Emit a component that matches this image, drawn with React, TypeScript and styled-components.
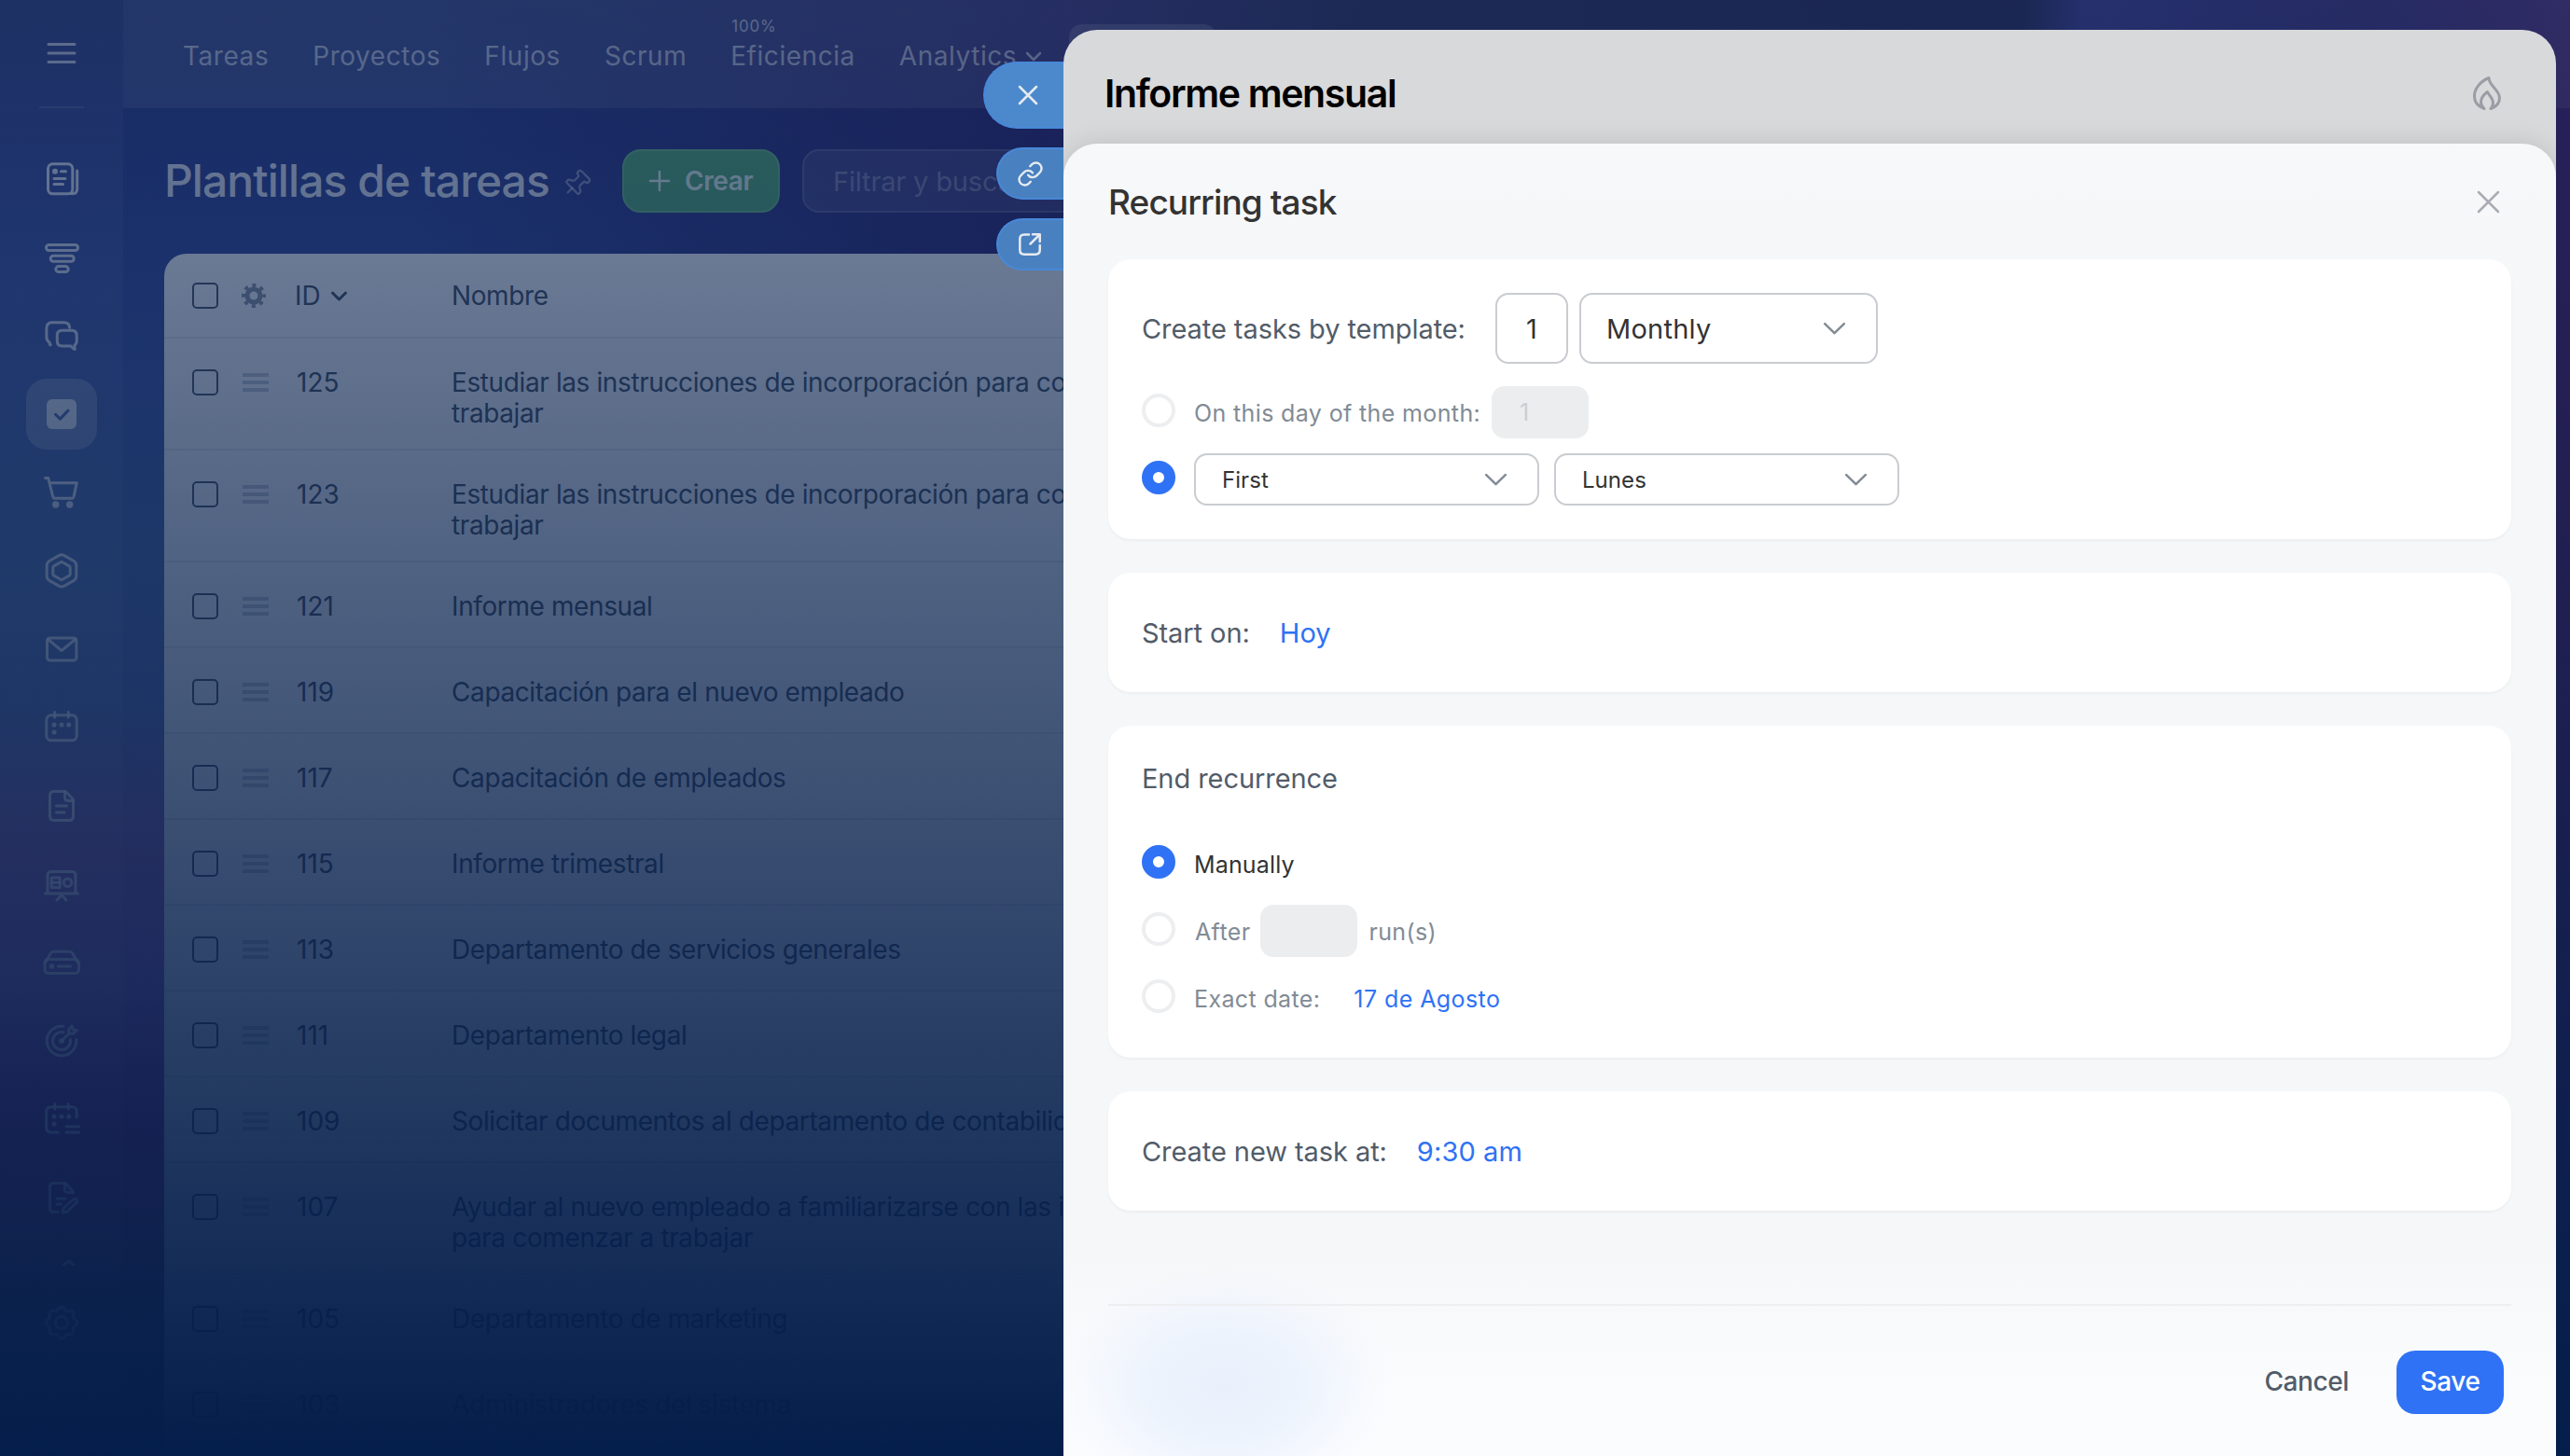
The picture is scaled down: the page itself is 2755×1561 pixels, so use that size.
import React, { ReactNode } from "react";
import styled, { createGlobalStyle } from "styled-components";
import { Link as LinkIcon, Pin } from "lucide-react";

const GlobalStyle = createGlobalStyle`
  *, *::before, *::after { box-sizing: border-box; }
  html, body { margin: 0; padding: 0; }
  body {
    width: 2755px;
    height: 1561px;
    overflow: hidden;
    font-family: Inter, "Liberation Sans", sans-serif;
    font-size: 28px;
  }
`;

/* ---------- shell ---------- */

const Screen = styled.div`
  position: relative;
  display: flex;
  width: 2755px;
  height: 1561px;
  overflow: hidden;
  background:
    linear-gradient(
      97deg,
      transparent 16%,
      rgba(52, 36, 104, 0.85) 39%,
      #1c1c4a 50%,
      #191745 73.6%,
      #302c82 75.8%,
      #32206d 86%,
      #48216f 93%,
      #63215e 95.5%,
      #642860 100%
    ),
    linear-gradient(
      180deg,
      #2c3a78 0,
      #33408a 150px,
      #3d4f9e 290px,
      #5471ac 600px,
      #6476af 760px,
      #9a68ab 918px,
      #9c67b8 1050px,
      #8f388b 1200px,
      #a03c70 1290px,
      #785a5a 1400px,
      #785a5a 1561px
    );
`;

const Scrim = styled.div`
  position: absolute;
  inset: 0;
  background: linear-gradient(180deg, rgba(4, 30, 75, 0.505) 0, rgba(4, 30, 75, 1) 100%);
`;

/* ---------- sidebar ---------- */

const Sidebar = styled.aside`
  display: flex;
  flex-direction: column;
  align-items: center;
  flex: none;
  width: 132px;
  background: rgba(255, 255, 255, 0.06);
  color: rgba(255, 255, 255, 0.82);
`;

const MenuToggle = styled.div`
  display: flex;
  align-items: center;
  justify-content: center;
  width: 48px;
  height: 116px;
  border-bottom: 2px solid rgba(255, 255, 255, 0.13);
  color: rgba(255, 255, 255, 0.66);
`;

const AppList = styled.nav`
  display: flex;
  flex-direction: column;
  align-items: center;
  height: 1207px;
  margin-top: 34px;
  overflow: hidden;
`;

const AppItem = styled.div<{ $active?: boolean }>`
  display: flex;
  align-items: center;
  justify-content: center;
  flex: none;
  width: 76px;
  height: 76px;
  margin: 4px 0;
  border-radius: 22px;
  background: ${(p) => (p.$active ? "rgba(255,255,255,0.25)" : "transparent")};
`;

const SettingsItem = styled(AppItem)`
  margin-top: 23px;
`;

const Glyph = styled.svg`
  display: block;
  flex: none;
  overflow: visible;
  fill: none;
  stroke: currentColor;
  stroke-width: 3;
  stroke-linecap: round;
  stroke-linejoin: round;
`;

const AppGlyph = ({ children }: { children: ReactNode }) => (
  <Glyph width="48" height="48" viewBox="0 0 48 48">
    {children}
  </Glyph>
);

const Dot = ({ x, y, r = 2.6 }: { x: number; y: number; r?: number }) => (
  <circle cx={x} cy={y} r={r} fill="currentColor" stroke="none" />
);

const flowerPath = () => {
  const steps = 96;
  const points: string[] = [];
  for (let i = 0; i < steps; i++) {
    const a = (i / steps) * Math.PI * 2;
    const r = 15.4 + 1.5 * Math.cos(8 * a);
    points.push(`${(24 + r * Math.sin(a)).toFixed(2)} ${(24 - r * Math.cos(a)).toFixed(2)}`);
  }
  return `M${points.join("L")}Z`;
};

const appIcons: { key: string; active?: boolean; icon: ReactNode }[] = [
  {
    key: "feed",
    icon: (
      <>
        <rect x="9.5" y="7.8" width="26.3" height="32" rx="5" />
        <Dot x={17} y={15.8} r={3} />
        <path d="M23.5 15.7h5M16 23.4h12M16 29.4h9.5M40.7 15v19.5q0 5.3-5.5 5.3" />
      </>
    ),
  },
  {
    key: "crm",
    icon: (
      <>
        <rect x="7.5" y="10.5" width="34" height="6" rx="3" />
        <rect x="12.2" y="22.3" width="25" height="6" rx="3" />
        <rect x="17.8" y="33.6" width="13.4" height="6" rx="3" />
      </>
    ),
  },
  {
    key: "chat",
    icon: (
      <>
        <path d="M12.3 33.6q-1.2 1.4-1-2.2-3.4-2.4-3.4-6V15.8q0-6 6-6h12.5q6 0 6.2 5.5" />
        <path d="M24.5 18.2h10.5q5.2 0 5.2 5.2v6q0 3.2-2.2 4.6l.2 4.6q-2.6-1.2-4.2-3.6h-9.5q-5.2 0-5.2-5.2v-6.4q0-5.2 5.2-5.2Z" />
      </>
    ),
  },
  {
    key: "tasks",
    active: true,
    icon: (
      <>
        <rect x="8" y="8" width="32" height="32" rx="6" fill="currentColor" stroke="none" />
        <path d="M17.5 24.3l5 4.8 8.5-9" stroke="#5c6fae" />
      </>
    ),
  },
  {
    key: "shop",
    icon: (
      <>
        <path d="M6.5 8.6h3.2l1.3 5.1M11 13.7h29.3l-3.2 14.6q-.5 2-2.6 2H17.3q-2.1 0-2.6-2L11 13.7" />
        <Dot x={17.7} y={37} r={3.7} />
        <Dot x={32.7} y={37} r={3.7} />
      </>
    ),
  },
  {
    key: "hex",
    icon: (
      <>
        <path d="M21.5 7.4q2.5-1.2 5 0l10.3 5.8q3 1.7 3 5.2v11q0 3.5-3 5.2l-10.3 5.8q-2.5 1.2-5 0l-10.3-5.8q-3-1.7-3-5.2v-11q0-3.5 3-5.2Z" />
        <path d="M24 14.2l8.2 4.7q1 .6 1 1.700v6.800q0 1.100-1 1.700L24 33.800l-8.200-4.700q-1-.6-1-1.700v-6.800q0-1.100 1-1.700Z" />
      </>
    ),
  },
  {
    key: "mail",
    icon: (
      <>
        <rect x="8.5" y="12" width="31.4" height="24" rx="3" />
        <path d="M9.5 13.5L24 25.5l14.7-12" />
      </>
    ),
  },
  {
    key: "calendar",
    icon: (
      <>
        <rect x="7.8" y="10.8" width="32.4" height="27" rx="5" />
        <path d="M16.7 7.5v5.5M31.3 7.5v5.5" />
        <Dot x={16} y={21} />
        <Dot x={24} y={21} />
        <Dot x={31.7} y={21} />
        <Dot x={16} y={29} />
      </>
    ),
  },
  {
    key: "docs",
    icon: (
      <>
        <path d="M15.5 8.5h13l8 8.500v18q0 4.500-4.500 4.500H16q-4.500 0-4.500-4.500V13q0-4.500 4-4.500Z" />
        <path d="M27.5 8.5v6.500q0 3.500 3.500 3.500h5.500M18.500 24h11M18.500 31h8.500" />
      </>
    ),
  },
  {
    key: "board",
    icon: (
      <>
        <path d="M9 34V14.5q0-4 4-4h22q4 0 4 4V34M6.5 34h35M24 35.5l-5 5.5M24 35.5l5 5.5" />
        <rect x="13.2" y="17" width="9" height="10.5" />
        <path d="M13.5 22.2h8.5" />
        <circle cx="30.5" cy="22.2" r="4.3" />
      </>
    ),
  },
  {
    key: "drive",
    icon: (
      <>
        <path d="M6.5 24l5.5-9.5q1.300-2.200 4-2.200h16q2.700 0 4 2.200l5.500 9.500" />
        <path d="M9 20.5h30q3.500 1 3.500 4.500v6q0 4.500-4.500 4.500H10.500q-4.500 0-4.500-4.500v-6q0-3.500 3-4.500Z" />
        <Dot x={13.5} y={28} r={2.8} />
        <path d="M20.5 28h13" />
      </>
    ),
  },
  {
    key: "target",
    icon: (
      <>
        <path d="M26 8.3A15.800 15.800 0 1 0 39.800 22.500" />
        <path d="M26 14.7A9.500 9.500 0 1 0 33.400 22.500" />
        <Dot x={24} y={24} r={3} />
        <path d="M24 24l8.5-8.5M32 15.8l-.5-3.800 3.500-4 1.300 3.700 4 1-4 3.800Z" />
      </>
    ),
  },
  {
    key: "planner",
    icon: (
      <>
        <path d="M40.2 22v-6.200q0-5-5-5H12.800q-5 0-5 5V33q0 5 5 5H20" />
        <path d="M16.7 7.5v5.500M31.300 7.500v5.500M29 31.700h13.500M29 38h13.500" />
        <Dot x={16} y={21} />
        <Dot x={24} y={21} />
        <Dot x={31.7} y={21} />
        <Dot x={16} y={29} />
      </>
    ),
  },
  {
    key: "sign",
    icon: (
      <>
        <path d="M36.5 18l-8-9.500h-13q-4 0-4 4.500v22q0 4.500 4.500 4.500h4.500" />
        <path d="M27.5 8.5v6.500q0 3.500 3.500 3.500h5.500M19 25h9M19 31h4.500" />
        <path d="M26 35.5l10.500-9.500q2-1.500 3.500 0t0 3.300L29.500 39.300l-4.500.6Z" />
      </>
    ),
  },
  { key: "more", icon: <path d="M26 12.5l5.5-4.7 5.5 4.7" /> },
];

/* ---------- main page ---------- */

const Main = styled.main`
  display: flex;
  flex-direction: column;
  flex: 1;
  min-width: 0;
`;

const TopNav = styled.nav`
  display: flex;
  flex: none;
  align-items: center;
  gap: 47px;
  height: 116px;
  padding: 4px 0 0 64px;
  background: rgba(255, 255, 255, 0.11);
  color: rgba(255, 255, 255, 0.6);
`;

const NavLink = styled.div`
  position: relative;
  display: flex;
  align-items: center;
  gap: 10px;
  line-height: 34px;
  letter-spacing: 0.55px;
`;

const NavCounter = styled.span`
  position: absolute;
  left: 1px;
  top: -25px;
  font-size: 17px;
  line-height: 20px;
  letter-spacing: 0.8px;
`;

const NavCurrent = styled.div`
  align-self: flex-start;
  width: 158px;
  height: 64px;
  margin: 22px 0 0 -17px;
  border-radius: 14px;
  background: rgba(255, 255, 255, 0.16);
`;

const Toolbar = styled.header`
  display: flex;
  flex: none;
  align-items: center;
  height: 68px;
  margin: 44px 0 44px 44px;
`;

const PageTitle = styled.h1`
  width: 426px;
  margin: 0;
  font-size: 48px;
  font-weight: 500;
  line-height: 60px;
  letter-spacing: -0.93px;
  white-space: nowrap;
  color: rgba(255, 255, 255, 0.86);
`;

const PinButton = styled.div`
  display: flex;
  width: 32px;
  margin: 6px 33px 0 0;
  color: rgba(255, 255, 255, 0.42);
  svg {
    transform: rotate(45deg);
  }
`;

const CreateButton = styled.button`
  display: flex;
  align-items: center;
  gap: 16px;
  width: 169px;
  height: 68px;
  margin-right: 24px;
  padding: 0 0 0 27px;
  border: 2px solid #6fb682;
  border-radius: 20px;
  background: #58a872;
  color: rgba(255, 255, 255, 0.84);
  font: 600 28px Inter, "Liberation Sans", sans-serif;
  letter-spacing: -0.4px;
`;

const FilterField = styled.div`
  display: flex;
  align-items: center;
  width: 420px;
  height: 68px;
  padding-left: 31px;
  border: 2px solid rgba(255, 255, 255, 0.13);
  border-radius: 18px;
  background: rgba(255, 255, 255, 0.1);
  color: rgba(255, 255, 255, 0.32);
  font-size: 29px;
  letter-spacing: -0.16px;
`;

const Table = styled.section`
  flex: 1;
  min-height: 0;
  margin: 0 60px 0 44px;
  overflow: hidden;
  border-radius: 24px 24px 0 0;
  background: #fff;
  color: #4c5663;
`;

const Row = styled.div<{ $tall?: boolean; $head?: boolean }>`
  display: grid;
  grid-template-columns: 54px ${(p) => (p.$head ? 56 : 58)}px ${(p) => (p.$head ? 168 : 166)}px 1fr;
  align-items: ${(p) => (p.$head ? "center" : "start")};
  height: ${(p) => (p.$head ? 91 : p.$tall ? 120 : 92)}px;
  padding: ${(p) => (p.$head ? "1px" : "31px")} 0 0 30px;
  border-bottom: 2px solid #ebedf0;
`;

const Checkbox = styled.div<{ $head?: boolean }>`
  width: 28px;
  height: 28px;
  margin-top: ${(p) => (p.$head ? 0 : 2)}px;
  border: 2px solid #525c69;
  border-radius: 5px;
`;

const Grip = styled.div`
  width: 28px;
  height: 20px;
  margin-top: 6px;
  border-top: 4px solid #ccd0d6;
  border-bottom: 4px solid #ccd0d6;
  padding: 4px 0;
  &::before {
    content: "";
    display: block;
    height: 4px;
    background: #ccd0d6;
  }
`;

const Cell = styled.div<{ $name?: boolean }>`
  display: flex;
  align-items: center;
  gap: 11px;
  line-height: 33px;
  letter-spacing: ${(p) => (p.$name ? -0.39 : 0)}px;
  white-space: pre-line;
`;

const templates: { id: number; name: string; tall?: boolean }[] = [
  { id: 125, name: "Estudiar las instrucciones de incorporación para comenzar a\ntrabajar", tall: true },
  { id: 123, name: "Estudiar las instrucciones de incorporación para comenzar a\ntrabajar", tall: true },
  { id: 121, name: "Informe mensual" },
  { id: 119, name: "Capacitación para el nuevo empleado" },
  { id: 117, name: "Capacitación de empleados" },
  { id: 115, name: "Informe trimestral" },
  { id: 113, name: "Departamento de servicios generales" },
  { id: 111, name: "Departamento legal" },
  { id: 109, name: "Solicitar documentos al departamento de contabilidad" },
  { id: 107, name: "Ayudar al nuevo empleado a familiarizarse con las instrucciones\npara comenzar a trabajar", tall: true },
  { id: 105, name: "Departamento de marketing" },
  { id: 103, name: "Administradores del sistema" },
];

/* ---------- slider ---------- */

const SliderTabs = styled.div`
  position: absolute;
  top: 66px;
  left: 1054px;
  display: flex;
  flex-direction: column;
  align-items: flex-end;
  gap: 20px;
  width: 86px;
`;

const SliderTab = styled.div<{ $large?: boolean }>`
  display: flex;
  align-items: center;
  justify-content: center;
  width: ${(p) => (p.$large ? 86 : 72)}px;
  height: ${(p) => (p.$large ? 72 : 56)}px;
  padding-left: ${(p) => (p.$large ? 8 : 0)}px;
  padding-right: ${(p) => (p.$large ? 0 : 2)}px;
  border: 2px solid #4888d8;
  border-right: 0;
  border-radius: 36px 0 0 36px;
  background: ${(p) => (p.$large ? "#4c89cc" : "#4980c0")};
  color: #e6eaf0;
`;

const Slider = styled.section`
  position: absolute;
  top: 32px;
  bottom: 0;
  left: 1140px;
  display: flex;
  flex-direction: column;
  width: 1600px;
  overflow: hidden;
  border-radius: 36px 36px 0 0;
  background: #d8d9db;
`;

const SliderHeader = styled.header`
  display: flex;
  flex: none;
  align-items: center;
  justify-content: space-between;
  height: 122px;
  padding: 13px 59px 0 44px;
  color: #9a9da3;
`;

const SliderTitle = styled.h2`
  margin: 0;
  font-size: 41px;
  font-weight: 600;
  letter-spacing: -1.36px;
  color: #000;
`;

const Dialog = styled.section`
  display: flex;
  flex: 1;
  flex-direction: column;
  min-height: 0;
  padding: 0 48px;
  border-radius: 36px 36px 0 0;
  background:
    radial-gradient(ellipse 180px 128px at 172px 1332px, #e8f0fb 0, rgba(235, 242, 253, 0.85) 45%, rgba(242, 246, 253, 0) 100%),
    linear-gradient(180deg, #f7f8fa 0, #f5f7f8 160px, #f5f7f8 1180px, #f8f9fb 1250px, #fbfcfe 1340px, #fbfcfe 100%);
  box-shadow: 0 0 28px rgba(0, 0, 0, 0.12);
`;

const DialogHeader = styled.header`
  display: flex;
  flex: none;
  align-items: center;
  justify-content: space-between;
  height: 124px;
  padding-right: 13px;
  color: #a8adb4;
`;

const DialogTitle = styled.h3`
  margin: 0;
  font-size: 37px;
  font-weight: 500;
  letter-spacing: -0.9px;
  color: #333;
`;

const Cards = styled.div`
  display: flex;
  flex: none;
  flex-direction: column;
  gap: 36px;
`;

const Card = styled.div`
  display: flex;
  flex-direction: column;
  gap: 16px;
  padding: 36px;
  border-radius: 24px;
  background: #fff;
  box-shadow: 0 2px 3px rgba(0, 0, 0, 0.04);
`;

const Field = styled.div<{ $height: number; $after?: number }>`
  display: flex;
  align-items: center;
  height: ${(p) => p.$height}px;
  margin-bottom: ${(p) => p.$after ?? 0}px;
`;

const Label = styled.span<{ $width?: number }>`
  flex: none;
  width: ${(p) => (p.$width ? `${p.$width}px` : "auto")};
  color: #525c69;
  font-size: 29px;
  letter-spacing: -0.07px;
  white-space: nowrap;
`;

const Option = styled.span<{ $on?: boolean; $width?: number; $gap?: number }>`
  flex: none;
  width: ${(p) => (p.$width ? `${p.$width}px` : "auto")};
  margin-left: ${(p) => p.$gap ?? 20}px;
  padding-top: 2px;
  color: ${(p) => (p.$on ? "#333" : "#828b95")};
  font-size: 25px;
  letter-spacing: ${(p) => (p.$on ? 0.15 : 0.37)}px;
  white-space: nowrap;
`;

const ValueLink = styled.a<{ $small?: boolean }>`
  margin-left: ${(p) => (p.$small ? 36 : 32)}px;
  padding-top: ${(p) => (p.$small ? 2 : 0)}px;
  color: #2f72f5;
  font-size: ${(p) => (p.$small ? 25 : 29)}px;
  letter-spacing: ${(p) => (p.$small ? 0.42 : 0.1)}px;
`;

const Radio = styled.span<{ $on?: boolean }>`
  flex: none;
  width: 36px;
  height: 36px;
  margin-bottom: 4px;
  border: ${(p) => (p.$on ? "12px solid #2f72f5" : "4px solid #edeef0")};
  border-radius: 50%;
  background: #fff;
`;

const NumberBox = styled.div`
  display: flex;
  align-items: center;
  justify-content: center;
  width: 78px;
  height: 76px;
  margin-right: 12px;
  border: 2px solid #c9ccd0;
  border-radius: 14px;
  color: #333;
  font-size: 29px;
`;

const DisabledBox = styled.div<{ $gap?: number }>`
  display: flex;
  align-items: center;
  width: 104px;
  height: 56px;
  margin-left: ${(p) => p.$gap ?? 0}px;
  padding: 0 0 0 30px;
  border-radius: 14px;
  background: #ecedef;
  color: #cbced2;
  font-size: 25px;
`;

const Select = styled.div<{ $small?: boolean; $gap?: number }>`
  display: flex;
  align-items: center;
  justify-content: space-between;
  width: ${(p) => (p.$small ? 370 : 320)}px;
  height: ${(p) => (p.$small ? 56 : 76)}px;
  margin-left: ${(p) => p.$gap ?? 0}px;
  padding: 0 33px 0 ${(p) => (p.$small ? 28 : 27)}px;
  border: 2px solid #c9ccd0;
  border-radius: 14px;
  color: #333;
  font-size: ${(p) => (p.$small ? 24 : 29)}px;
  letter-spacing: ${(p) => (p.$small ? 0.05 : 0.25)}px;
`;

const Footer = styled.footer`
  display: flex;
  flex: none;
  align-items: flex-start;
  justify-content: flex-end;
  gap: 51px;
  margin-top: 100px;
  padding: 48px 8px 0 0;
  border-top: 2px solid #edeef0;
`;

const FooterButton = styled.button<{ $primary?: boolean }>`
  height: 68px;
  width: ${(p) => (p.$primary ? "115px" : "auto")};
  padding: 0 0 2px;
  border: 0;
  border-radius: 20px;
  background: ${(p) => (p.$primary ? "#2f72f5" : "transparent")};
  color: ${(p) => (p.$primary ? "#fff" : "#525c69")};
  font: 500 28px Inter, "Liberation Sans", sans-serif;
  letter-spacing: -0.4px;
`;

const ThinGlyph = styled(Glyph)`
  stroke-width: 2.5;
`;

const ArrowGlyph = styled(ThinGlyph)`
  color: #828b95;
`;

const SelectArrow = () => (
  <ArrowGlyph width="23" height="13" viewBox="0 0 23 13">
    <path d="M1.2 1.2L11.5 11.2L21.8 1.2" />
  </ArrowGlyph>
);

const GearGlyph = styled(Glyph)`
  color: #929aa5;
  margin-left: -1px;
  stroke-linecap: butt;
`;

export default function App() {
  return (
    <>
      <GlobalStyle />
      <Screen>
        <Sidebar>
          <MenuToggle>
            <Glyph width="32" height="22" viewBox="0 0 32 22">
              <path d="M2 1.5h28M2 11h28M2 20.5h28" />
            </Glyph>
          </MenuToggle>
          <AppList>
            {appIcons.map((app) => (
              <AppItem key={app.key} $active={app.active}>
                <AppGlyph>{app.icon}</AppGlyph>
              </AppItem>
            ))}
          </AppList>
          <SettingsItem>
            <AppGlyph>
              <path d={flowerPath()} />
              <circle cx="24" cy="24" r="6.5" />
            </AppGlyph>
          </SettingsItem>
        </Sidebar>

        <Main>
          <TopNav>
            <NavLink>Tareas</NavLink>
            <NavLink>Proyectos</NavLink>
            <NavLink>Flujos</NavLink>
            <NavLink>Scrum</NavLink>
            <NavLink>
              <NavCounter>100%</NavCounter>
              Eficiencia
            </NavLink>
            <NavLink>
              Analytics
              <ThinGlyph width="16" height="9" viewBox="0 0 16 9">
                <path d="M1 1l7 7 7-7" />
              </ThinGlyph>
            </NavLink>
            <NavCurrent />
          </TopNav>

          <Toolbar>
            <PageTitle>Plantillas de tareas</PageTitle>
            <PinButton>
              <Pin size={32} strokeWidth={1.7} />
            </PinButton>
            <CreateButton>
              <ThinGlyph width="22" height="22" viewBox="0 0 22 22">
                <path d="M11 1v20M1 11h20" />
              </ThinGlyph>
              Crear
            </CreateButton>
            <FilterField>Filtrar y buscar</FilterField>
          </Toolbar>

          <Table>
            <Row $head>
              <Checkbox $head />
              <GearGlyph width="26" height="26" viewBox="0 0 26 26">
                <circle cx="13" cy="13" r="7" strokeWidth="5" style={{ strokeWidth: 5 }} />
                <circle cx="13" cy="13" r="11" strokeDasharray="4 4.639" strokeDashoffset="2" style={{ strokeWidth: 4 }} />
              </GearGlyph>
              <Cell>
                ID
                <Glyph width="17" height="10" viewBox="0 0 17 10">
                  <path d="M1.5 2l7 7 7-7" />
                </Glyph>
              </Cell>
              <Cell $name>Nombre</Cell>
            </Row>
            {templates.map((t) => (
              <Row key={t.id} $tall={t.tall}>
                <Checkbox />
                <Grip />
                <Cell>{t.id}</Cell>
                <Cell $name>{t.name}</Cell>
              </Row>
            ))}
          </Table>
        </Main>

        <Scrim />

        <SliderTabs>
          <SliderTab $large>
            <ThinGlyph width="20" height="20" viewBox="0 0 20 20">
              <path d="M1 1l18 18M19 1L1 19" />
            </ThinGlyph>
          </SliderTab>
          <SliderTab>
            <LinkIcon size={29} strokeWidth={2} />
          </SliderTab>
          <SliderTab>
            <ThinGlyph width="24" height="24" viewBox="0 0 24 24">
              <path d="M11 1.5H6q-4.7 0-4.7 4.7v11.8q0 4.7 4.7 4.7h12q4.7 0 4.7-4.7v-5M12.5 11.5L22.7 1.3M15 1.3h7.700v7.700" />
            </ThinGlyph>
          </SliderTab>
        </SliderTabs>

        <Slider>
          <SliderHeader>
            <SliderTitle>Informe mensual</SliderTitle>
            <Glyph width="30" height="36" viewBox="0 0 30 36">
              <path d="M12 34.5C5 32 1.5 27 1.5 21C1.5 13 8 5 17 1.5C17 10 28.5 14 28.5 23C28.5 28.5 25 32.5 19 34.5C20.5 33 21.5 31 21.5 28C21.5 23.5 17 20 15.5 16.5C12 19 8.5 23 8.5 27.5C8.5 30 9.5 32 12 34.5" />
            </Glyph>
          </SliderHeader>

          <Dialog>
            <DialogHeader>
              <DialogTitle>Recurring task</DialogTitle>
              <ThinGlyph width="23" height="23" viewBox="0 0 23 23">
                <path d="M1 1l21 21M22 1L1 22" />
              </ThinGlyph>
            </DialogHeader>

            <Cards>
              <Card>
                <Field $height={76} $after={8}>
                  <Label $width={379}>Create tasks by template:</Label>
                  <NumberBox>1</NumberBox>
                  <Select>
                    Monthly
                    <SelectArrow />
                  </Select>
                </Field>
                <Field $height={56}>
                  <Radio />
                  <Option $width={319}>On this day of the month:</Option>
                  <DisabledBox>1</DisabledBox>
                </Field>
                <Field $height={56}>
                  <Radio $on />
                  <Select $small $gap={20}>
                    First
                    <SelectArrow />
                  </Select>
                  <Select $small $gap={16}>
                    Lunes
                    <SelectArrow />
                  </Select>
                </Field>
              </Card>

              <Card>
                <Field $height={56}>
                  <Label>Start on:</Label>
                  <ValueLink>Hoy</ValueLink>
                </Field>
              </Card>

              <Card>
                <Field $height={41} $after={27}>
                  <Label>End recurrence</Label>
                </Field>
                <Field $height={56}>
                  <Radio $on />
                  <Option $on>Manually</Option>
                </Field>
                <Field $height={56}>
                  <Radio />
                  <Option $gap={21}>After</Option>
                  <DisabledBox $gap={11} />
                  <Option $gap={12}>run(s)</Option>
                </Field>
                <Field $height={56}>
                  <Radio />
                  <Option>Exact date:</Option>
                  <ValueLink $small>17 de Agosto</ValueLink>
                </Field>
              </Card>

              <Card>
                <Field $height={56}>
                  <Label>Create new task at:</Label>
                  <ValueLink>9:30 am</ValueLink>
                </Field>
              </Card>
            </Cards>

            <Footer>
              <FooterButton>Cancel</FooterButton>
              <FooterButton $primary>Save</FooterButton>
            </Footer>
          </Dialog>
        </Slider>
      </Screen>
    </>
  );
}
